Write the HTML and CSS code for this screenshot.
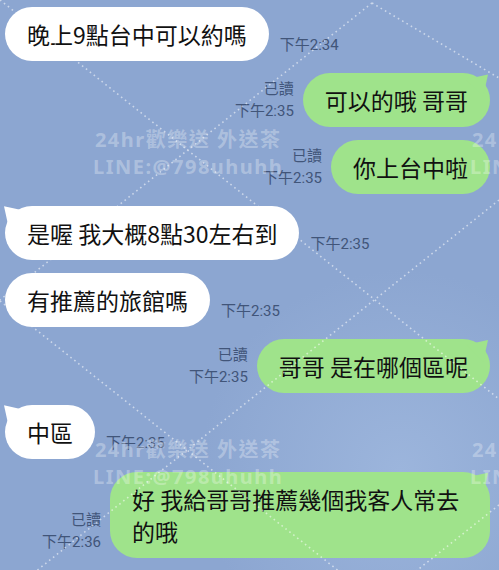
FILE: index.html
```html
<!DOCTYPE html>
<html>
<head>
    <title>聊天</title>
    <meta charset="utf-8">
    <link rel="stylesheet" href="styles.css">
</head>
<body>
    <div class="screen">
        <div class="chat">
            <div class="row in">
                <div class="bubble">晚上9點台中可以約嗎</div>
                <div class="time">下午2:34</div>
            </div>
            <div class="row out">
                <div class="meta"><div>已讀</div><div>下午2:35</div></div>
                <div class="bubble green tail">可以的哦 哥哥</div>
            </div>
            <div class="row out">
                <div class="meta"><div>已讀</div><div>下午2:35</div></div>
                <div class="bubble green">你上台中啦</div>
            </div>
            <div class="row in">
                <div class="bubble tail">是喔 我大概8點30左右到</div>
                <div class="time">下午2:35</div>
            </div>
            <div class="row in">
                <div class="bubble">有推薦的旅館嗎</div>
                <div class="time">下午2:35</div>
            </div>
            <div class="row out">
                <div class="meta"><div>已讀</div><div>下午2:35</div></div>
                <div class="bubble green tail">哥哥 是在哪個區呢</div>
            </div>
            <div class="row in">
                <div class="bubble tail">中區</div>
                <div class="time">下午2:35</div>
            </div>
            <div class="row out">
                <div class="meta"><div>已讀</div><div>下午2:36</div></div>
                <div class="bubble green tail wide">好 我給哥哥推薦幾個我客人常去的哦</div>
            </div>
        </div>

        <!-- 浮水印 -->
        <svg class="lines" width="499" height="570" viewBox="0 0 499 570">
            <g stroke="#fff" stroke-width="1.6" stroke-dasharray="1.6 3.4" fill="none">
                <line x1="0" y1="0" x2="499" y2="399"/>
                <line x1="372" y1="3" x2="0" y2="300"/>
                <line x1="372" y1="3" x2="499" y2="78"/>
                <line x1="499" y1="200" x2="0" y2="600"/>
                <line x1="0" y1="301" x2="340" y2="572"/>
                <line x1="499" y1="505" x2="415" y2="572"/>
            </g>
        </svg>
        <div class="mark mark-a"><div>24hr歡樂送 外送茶</div><div>LINE:@798uhuhh</div></div>
        <div class="mark mark-b"><div>24hr歡樂送 外送茶</div><div>LINE:@798uhuhh</div></div>
        <div class="mark mark-c"><div>24hr歡樂送 外送茶</div><div>LINE:@798uhuhh</div></div>
        <div class="mark mark-d"><div>24hr歡樂送 外送茶</div><div>LINE:@798uhuhh</div></div>
    </div>
</body>
</html>
```

FILE: styles.css
```css
body {
    margin: 0;
    background: #8ca6d1;
}
.screen {
    position: relative;
    width: 499px;
    height: 570px;
    overflow: hidden;
    background: radial-gradient(circle at 400px 470px, #9cb5dc 0, #8ca6d1 200px);
    font-family: "Noto Sans CJK TC", "Noto Sans", sans-serif;
}
.chat {
    display: flex;
    flex-direction: column;
    gap: 12.4px;
    padding: 7px 9px 0 5px;
}
.row {
    display: flex;
    align-items: flex-end;
}
.row.in {
    gap: 11px;
}
.row.out {
    justify-content: flex-end;
    gap: 9px;
}
.bubble {
    position: relative;
    padding: 11px 22px;
    font-size: 23px;
    line-height: 32px;
    color: #111;
    background: #fff;
    border-radius: 27px;
}
.bubble.green {
    background: #9fe38b;
}
.bubble.wide {
    max-width: 336px;
}
.bubble.tail::before {
    content: "";
    position: absolute;
    left: -1px;
    top: 0;
    width: 22px;
    height: 22px;
    background: inherit;
    clip-path: polygon(0 0, 100% 22%, 22% 100%);
}
.bubble.green.tail::before {
    left: auto;
    right: 2px;
    top: 1px;
    clip-path: polygon(100% 0, 0 22%, 78% 100%);
}
.time, .meta {
    margin-bottom: 5px;
    font-family: Roboto, "Noto Sans CJK TC", sans-serif;
    font-size: 15px;
    line-height: 22px;
    color: #415579;
    white-space: nowrap;
}
.meta {
    text-align: right;
}
.lines {
    position: absolute;
    left: 0;
    top: 0;
    opacity: 0.55;
    pointer-events: none;
}
.mark {
    position: absolute;
    font-family: "Noto Sans", "Noto Sans CJK TC", sans-serif;
    font-size: 20px;
    font-weight: bold;
    line-height: 27px;
    letter-spacing: 1.5px;
    text-align: center;
    color: rgba(255, 255, 255, 0.3);
    white-space: nowrap;
    pointer-events: none;
}
.mark-a { left: 93px; top: 126px; }
.mark-b { left: 470px; top: 126px; }
.mark-c { left: 93px; top: 436px; }
.mark-d { left: 470px; top: 436px; }
```
